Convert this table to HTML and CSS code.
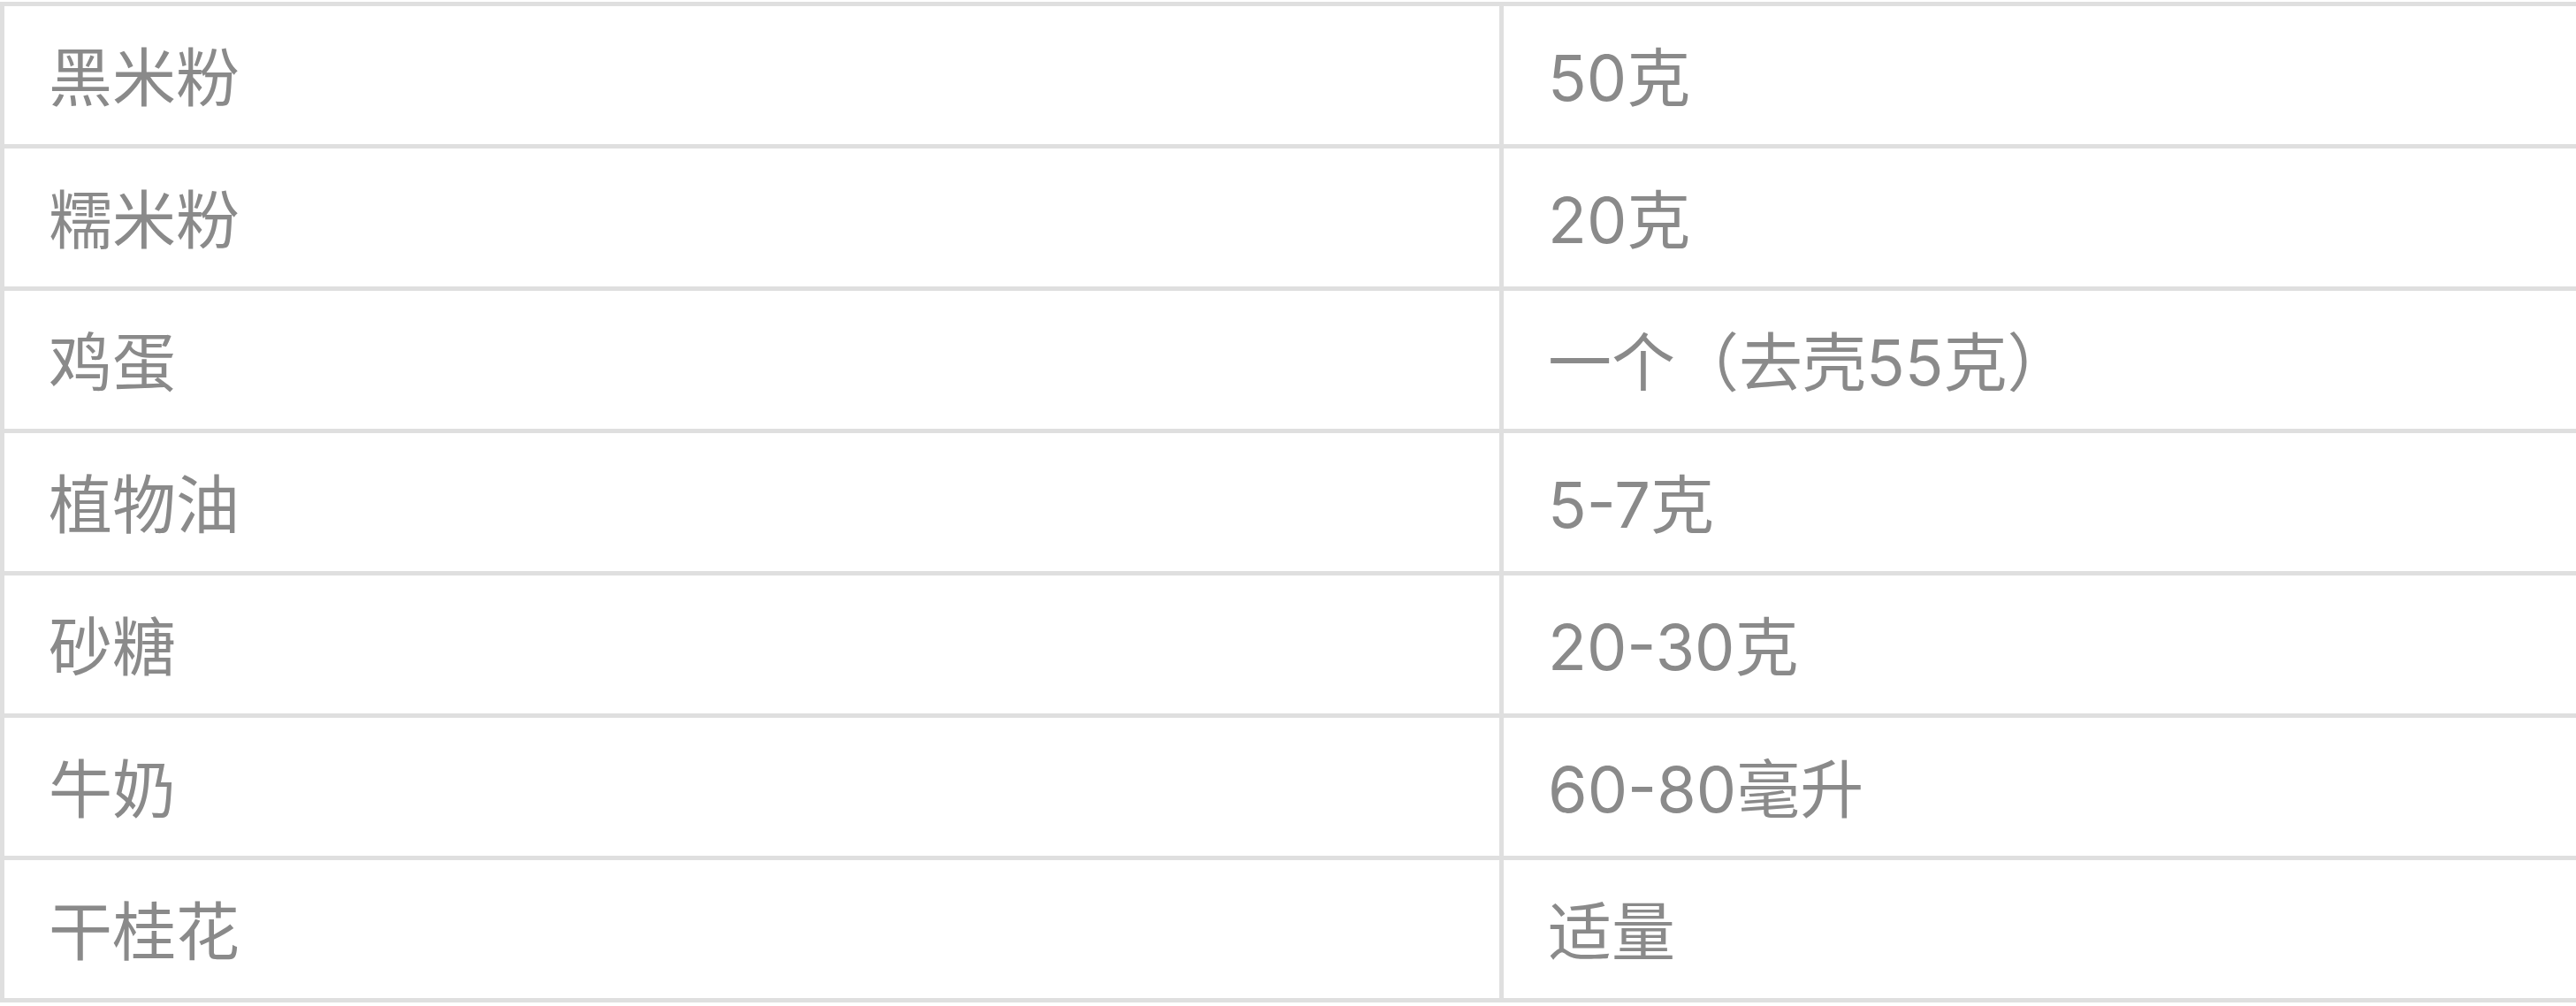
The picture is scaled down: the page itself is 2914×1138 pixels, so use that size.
FILE: index.html
```html
<!DOCTYPE html>
<html lang="zh-CN">
<head>
<meta charset="utf-8">
<title>食材</title>
<link rel="stylesheet" href="styles.css">
</head>
<body>
<div class="sheet">
  <div class="cell name">黑米粉</div><div class="cell qty">50克</div>
  <div class="cell name">糯米粉</div><div class="cell qty">20克</div>
  <div class="cell name">鸡蛋</div><div class="cell qty">一个（去壳55克）</div>
  <div class="cell name">植物油</div><div class="cell qty">5-7克</div>
  <div class="cell name">砂糖</div><div class="cell qty">20-30克</div>
  <div class="cell name">牛奶</div><div class="cell qty">60-80毫升</div>
  <div class="cell name">干桂花</div><div class="cell qty">适量</div>
</div>
</body>
</html>
```

FILE: styles.css
```css
html, body {
  margin: 0;
  padding: 0;
  background: #ffffff;
}
body {
  overflow: hidden;
}
.sheet {
  margin-top: 2px;
  display: grid;
  grid-template-columns: 1696px 1fr;
  border-bottom: 5px solid #dfdfdf;
}
.cell {
  border-top: 5px solid #dfdfdf;
  border-left: 5px solid #dfdfdf;
  padding: 27px 0 21px 50px;
  font-family: Inter, "Noto Sans CJK SC", sans-serif;
  font-size: 72px;
  line-height: 108px;
  color: #8a8a8a;
  white-space: nowrap;
}
```
